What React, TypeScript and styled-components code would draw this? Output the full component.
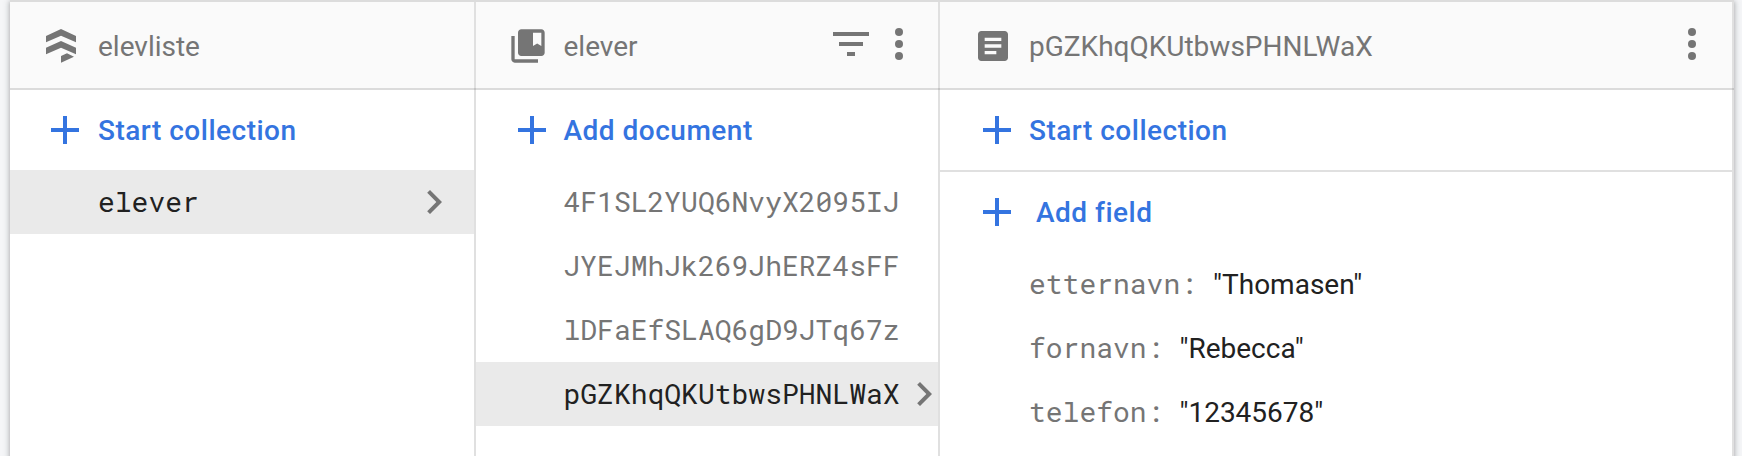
import React from 'react';
import styled, { createGlobalStyle } from 'styled-components';

const sans = `Roboto, 'Liberation Sans', sans-serif`;
const mono = `'Roboto Mono', 'Liberation Mono', monospace`;
const line = 'rgba(0, 0, 0, 0.12)';

const GlobalStyle = createGlobalStyle`
  * { box-sizing: border-box; }
  body {
    margin: 0;
    background: #f5f6f8;
    font: 400 28px/40px ${sans};
    color: #212121;
    overflow: hidden;
  }
`;

const Page = styled.main`
  height: 456px;
  padding: 0 8px 0 10px;
  overflow: hidden;
`;

const Card = styled.section`
  display: grid;
  grid-template-columns: 466px 464px 794px;
  height: 520px;
  background: #fff;
  border-top: 2px solid #dcdcdc;
  box-shadow: 0 2px 4px rgba(60, 64, 67, 0.3), 0 2px 6px 2px rgba(60, 64, 67, 0.15);
`;

const Panel = styled.div`
  display: flex;
  flex-direction: column;
  min-width: 0;
  border-right: 2px solid ${line};
`;

/* The rule below the header runs on across the panel's right border. */
const Header = styled.header<{ $end: number }>`
  flex: none;
  display: flex;
  align-items: center;
  height: 88px;
  margin-right: -2px;
  padding: 0 ${p => p.$end}px 0 31px;
  border-bottom: 2px solid ${line};
  background: linear-gradient(#fafafa, #fafafa) 0 0 / calc(100% - 2px) 100% no-repeat border-box;
  color: #757575;
`;

const Title = styled.h2<{ $gap?: number }>`
  flex: 1;
  margin: 4px 0 0 ${p => p.$gap ?? 17}px;
  font: inherit;
  white-space: nowrap;
`;

const Icon = styled.svg<{ $size: number }>`
  flex: none;
  display: block;
  width: ${p => p.$size}px;
  height: ${p => p.$size}px;
  fill: currentColor;
`;

const HeaderIcon = styled(Icon)<{ $inset?: number }>`
  margin: 2px 0 0 ${p => p.$inset ?? 0}px;
`;

const MenuIcon = styled(Icon)`
  margin-bottom: 2px;
`;

const AddButton = styled.button<{ $inset?: number; $gap?: number; $ruled?: boolean }>`
  flex: none;
  display: flex;
  align-items: center;
  gap: ${p => p.$gap ?? 9}px;
  height: ${p => (p.$ruled ? 82 : 80)}px;
  padding: 0 0 0 ${p => p.$inset ?? 31}px;
  border: 0;
  border-bottom: ${p => (p.$ruled ? `2px solid ${line}` : '0')};
  background: none;
  color: #3474e0;
  font: 500 28px/40px ${sans};
  letter-spacing: 0.5px;
  text-align: left;
`;

const Label = styled.span`
  padding-top: 2px;
`;

const Item = styled.div<{ $active?: boolean; $inset?: number }>`
  flex: none;
  display: flex;
  align-items: center;
  justify-content: space-between;
  height: 64px;
  padding: 0 0 0 ${p => p.$inset ?? 88}px;
  background: ${p => (p.$active ? '#eaeaea' : 'transparent')};
  color: ${p => (p.$active ? '#212121' : '#757575')};
  font-family: ${mono};
  white-space: nowrap;
`;

const Chevron = styled(Icon)<{ $end: number }>`
  margin-right: ${p => p.$end}px;
  color: #757575;
`;

const Field = styled.div`
  flex: none;
  display: flex;
  align-items: baseline;
  height: 64px;
  padding: 12px 0 0 89px;
`;

const Key = styled.span`
  margin-right: 16px;
  color: #757575;
  font-family: ${mono};
`;

const Value = styled.span`
  color: #212121;
`;

const Plus = () => (
  <Icon $size={48} viewBox="0 0 24 24"><path d="M19 13h-6v6h-2v-6H5v-2h6V5h2v6h6z" /></Icon>
);

const More = () => (
  <MenuIcon $size={48} viewBox="0 0 24 24">
    <circle cx="12" cy="6" r="2" /><circle cx="12" cy="12" r="2" /><circle cx="12" cy="18" r="2" />
  </MenuIcon>
);

const Go = ({ end }: { end: number }) => (
  <Chevron $size={48} $end={end} viewBox="0 0 24 24">
    <path d="M10 6 8.59 7.41 13.17 12l-4.58 4.59L10 18l6-6z" />
  </Chevron>
);

const documents = ['4F1SL2YUQ6NvyX2095IJ', 'JYEJMhJk269JhERZ4sFF', 'lDFaEfSLAQ6gD9JTq67z', 'pGZKhqQKUtbwsPHNLWaX'];
const selected = 'pGZKhqQKUtbwsPHNLWaX';
const fields = [['etternavn', 'Thomasen'], ['fornavn', 'Rebecca'], ['telefon', '12345678']];

export default function App() {
  return (
    <Page>
      <GlobalStyle />
      <Card>
        <Panel>
          <Header $end={16}>
            <HeaderIcon $size={40} viewBox="0 0 40 40">
              <path d="M5 10 20 3l15 7v6.3L20 9.7 5 16.3zM5 21.7 20 15l15 6.7v6.6l-15-6.6-15 6.6zM20 30l6-2.7 7 3.4-13 6z" />
            </HeaderIcon>
            <Title>elevliste</Title>
          </Header>
          <AddButton>
            <Plus /><Label>Start collection</Label>
          </AddButton>
          <Item $active>
            elever<Go end={16.5} />
          </Item>
        </Panel>
        <Panel>
          <Header $end={17}>
            <HeaderIcon $size={40} $inset={0.5} viewBox="0 0 24 24">
              <path d="M4 6H2v14c0 1.1.9 2 2 2h14v-2H4V6z" />
              <path d="M20 2H8c-1.1 0-2 .9-2 2v12c0 1.1.9 2 2 2h12c1.1 0 2-.9 2-2V4c0-1.1-.9-2-2-2zm0 10-2.5-1.5L15 12V4h5v8z" />
            </HeaderIcon>
            <Title $gap={16}>elever</Title>
            <MenuIcon $size={48} viewBox="0 0 24 24"><path d="M10 18h4v-2h-4v2zM3 6v2h18V6H3zm3 7h12v-2H6v2z" /></MenuIcon>
            <More />
          </Header>
          <AddButton $inset={31.5} $gap={8}>
            <Plus /><Label>Add document</Label>
          </AddButton>
          {documents.map(id => (
            <Item key={id} $active={id === selected} $inset={87.5}>
              {id}{id === selected && <Go end={-9} />}
            </Item>
          ))}
        </Panel>
        <Panel>
          <Header $end={18}>
            <HeaderIcon $size={40} $inset={2} viewBox="0 0 24 24">
              <path d="M19 3H5c-1.1 0-2 .9-2 2v14c0 1.1.9 2 2 2h14c1.1 0 2-.9 2-2V5c0-1.1-.9-2-2-2zm-5 14H7v-2h7v2zm3-4H7v-2h10v2zm0-4H7V7h10v2z" />
            </HeaderIcon>
            <Title $gap={16}>{selected}</Title>
            <More />
          </Header>
          <AddButton $ruled $inset={33} $gap={8}>
            <Plus /><Label>Start collection</Label>
          </AddButton>
          <AddButton $inset={33} $gap={15}>
            <Plus /><Label>Add field</Label>
          </AddButton>
          {fields.map(([name, value]) => (
            <Field key={name}>
              <Key>{name}:</Key>
              <Value>"{value}"</Value>
            </Field>
          ))}
        </Panel>
      </Card>
    </Page>
  );
}
